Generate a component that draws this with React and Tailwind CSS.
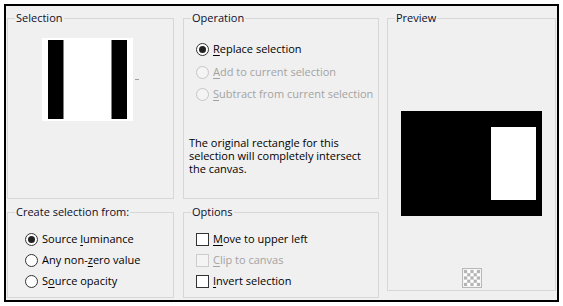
import React from "react";

const font = { fontFamily: '"Open Sans", "Noto Sans", sans-serif' };

function Radio({ checked, disabled, children }) {
  return (
    <div className="flex items-center h-[16px]">
      <span
        className={
          "w-[13px] h-[13px] rounded-full border flex items-center justify-center shrink-0 " +
          (disabled ? "border-[#c6c6c6] bg-[#f4f4f4]" : "border-[#333] bg-white")
        }
      >
        {checked && <span className="w-[7px] h-[7px] rounded-full bg-[#222]" />}
      </span>
      <span className={"ml-[4px] text-[11px] leading-[16px] " + (disabled ? "text-[#a3a3a3]" : "text-black")}>
        {children}
      </span>
    </div>
  );
}

function Check({ disabled, children }) {
  return (
    <div className="flex items-center h-[16px]">
      <span
        className={
          "w-[13px] h-[13px] border shrink-0 " +
          (disabled ? "border-[#cccccc] bg-[#f4f4f4]" : "border-[#333] bg-white")
        }
      />
      <span className={"ml-[4px] text-[11px] leading-[16px] " + (disabled ? "text-[#a3a3a3]" : "text-black")}>
        {children}
      </span>
    </div>
  );
}

function U({ children }) {
  return <span className="underline decoration-1 underline-offset-[2px]">{children}</span>;
}

function Box({ title, className, children }) {
  return (
    <fieldset className={"border border-[#d7d7d7] min-w-0 p-0 m-0 " + className}>
      <legend className="ml-[7px] px-[1px] text-[11px] leading-[16px] text-[#0e0e2a]">{title}</legend>
      {children}
    </fieldset>
  );
}

function Checker() {
  const cells = [];
  for (let r = 0; r < 5; r++) {
    for (let c = 0; c < 5; c++) {
      if ((r + c) % 2 === 0) cells.push(<rect key={r + "-" + c} x={2 + c * 3.2} y={2 + r * 3.2} width="3.2" height="3.2" fill="#b4b4b4" />);
    }
  }
  return (
    <svg width="20" height="20" viewBox="0 0 20 20">
      <rect x="0.5" y="0.5" width="19" height="19" fill="#f4f4f4" stroke="#b8b8b8" />
      <rect x="2" y="2" width="16" height="16" fill="#ffffff" />
      {cells}
    </svg>
  );
}

export default function App() {
  return (
    <div className="w-[563px] h-[306px] bg-white p-[4px]" style={font}>
      <div className="w-[555px] h-[298px] border-2 border-black bg-[#f0f0f0] flex pl-[1px] pt-[4px]">
        {/* Column 1 */}
        <div className="flex flex-col w-[167px]">
          <Box title="Selection" className="h-[189px]">
            <div className="flex items-center ml-[34px] mt-[12px]">
              <div className="w-[91px] h-[83px] bg-white flex justify-between pl-[6px] pr-[6px] pt-[2px] pb-[2px]">
                <div className="w-[16px] h-full bg-black border-r border-[#808080]" />
                <div className="w-[16px] h-full bg-black border-l border-[#808080]" />
              </div>
              <div className="ml-[2px] w-[4px] h-[1px] bg-[#a0a0a0]" />
            </div>
          </Box>
          <Box title="Create selection from:" className="h-[94px] mt-[5px]">
            <div className="flex flex-col gap-[5px] pl-[17px] mt-[11px]">
              <Radio checked>Source <U>l</U>uminance</Radio>
              <Radio>Any non-<U>z</U>ero value</Radio>
              <Radio>S<U>o</U>urce opacity</Radio>
            </div>
          </Box>
        </div>

        {/* Column 2 */}
        <div className="flex flex-col w-[196px] ml-[9px]">
          <Box title="Operation" className="h-[189px]">
            <div className="flex flex-col pl-[12px] mt-[15px]">
              <Radio checked><U>R</U>eplace selection</Radio>
              <div className="mt-[7px]">
                <Radio disabled><U>A</U>dd to current selection</Radio>
              </div>
              <div className="mt-[6px]">
                <Radio disabled><U>S</U>ubtract from current selection</Radio>
              </div>
            </div>
            <p className="pl-[5px] mt-[34px] text-[11px] leading-[13px] text-black w-[180px]">
              The original rectangle for this selection will completely intersect the canvas.
            </p>
          </Box>
          <Box title="Options" className="h-[94px] mt-[5px]">
            <div className="flex flex-col gap-[5px] pl-[12px] mt-[11px]">
              <Check><U>M</U>ove to upper left</Check>
              <Check disabled><U>C</U>lip to canvas</Check>
              <Check><U>I</U>nvert selection</Check>
            </div>
          </Box>
        </div>

        {/* Column 3 */}
        <div className="w-[169px] ml-[8px]">
          <Box title="Preview" className="h-[281px]">
            <div className="flex flex-col items-center">
              <div className="mt-[85px] w-[141px] h-[105px] bg-black pl-[90px] pt-[16px]">
                <div className="w-[45px] h-[73px] bg-white" />
              </div>
              <div className="mt-[52px]">
                <Checker />
              </div>
            </div>
          </Box>
        </div>
      </div>
    </div>
  );
}
